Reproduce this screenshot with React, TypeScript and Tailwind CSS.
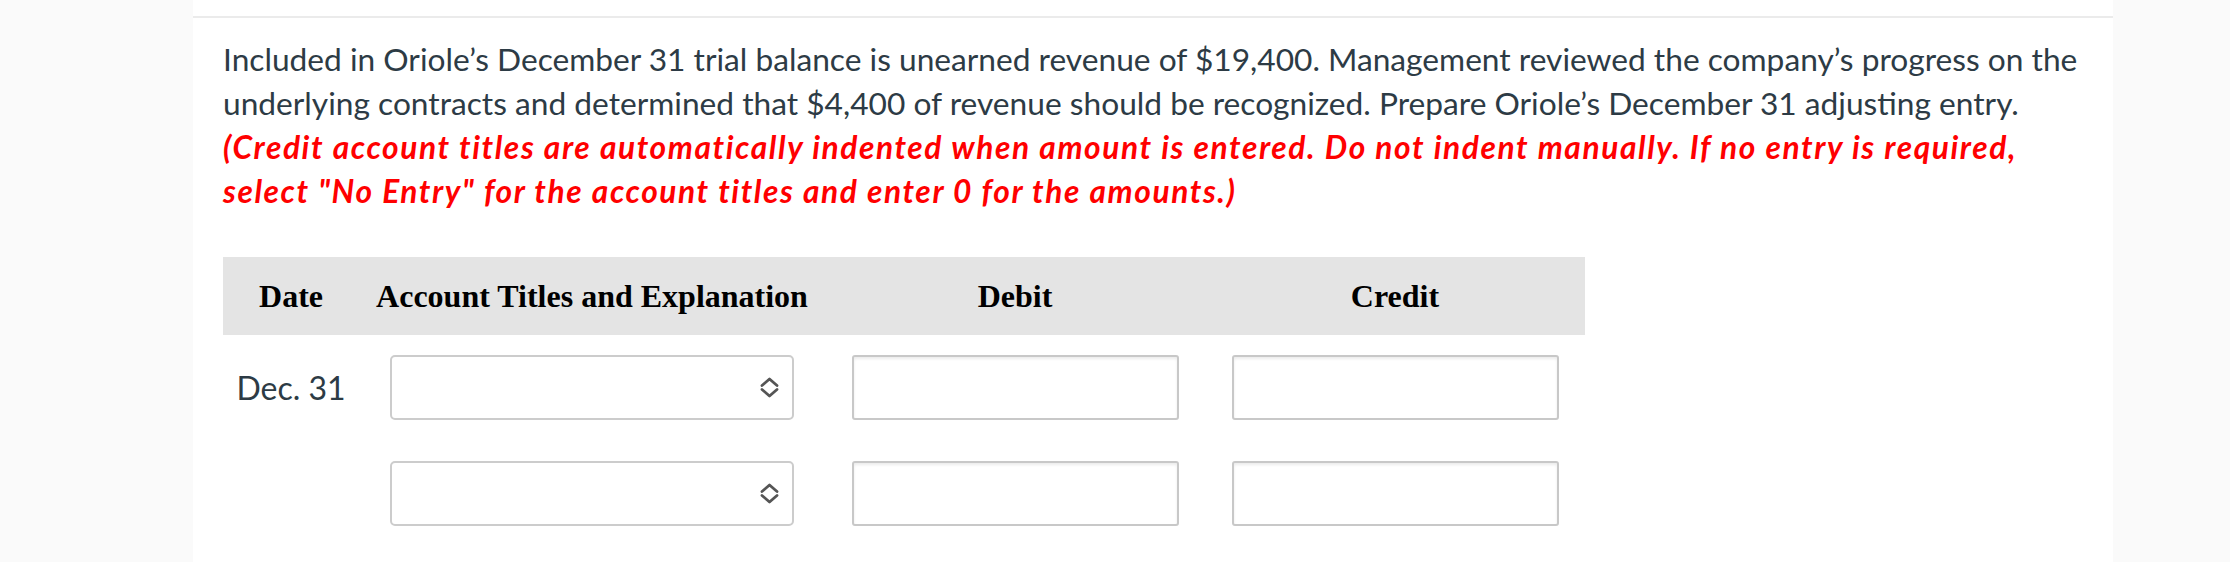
import React from "react";

function Chevrons() {
  return (
    <svg width="19" height="21" viewBox="0 0 19 21" fill="none" stroke="#555555" strokeWidth="2.8" strokeLinecap="round" strokeLinejoin="round">
      <path d="M2 8.5 L9.5 2 L17 8.5" />
      <path d="M2 12.5 L9.5 19 L17 12.5" />
    </svg>
  );
}

function SelectBox() {
  return (
    <div className="w-[404px] h-[65px] border-2 border-[#cccccc] rounded-[5px] bg-white flex items-center justify-end pr-[13px]">
      <Chevrons />
    </div>
  );
}

function AmountBox() {
  return (
    <div className="w-[327px] h-[65px] border-2 border-[#c8c8c8] rounded-[3px] bg-white shadow-[inset_0_2px_3px_rgba(0,0,0,0.08)]" />
  );
}

export default function App() {
  return (
    <div className="w-[2230px] h-[562px] bg-[#fafafa] overflow-hidden">
      <div className="ml-[193px] w-[1920px] h-[562px] bg-white pt-[16px]">
        <div className="border-t-2 border-[#ebebeb] pl-[30px] pt-[19px]">
          <p className="w-[1865px] text-[31.7px] leading-[44px] text-[#2d3b45] font-['Lato','Noto_Sans',sans-serif]">
            Included in Oriole’s December 31 trial balance is unearned revenue of $19,400. Management reviewed the company’s progress on the underlying contracts and determined that $4,400 of revenue should be recognized. Prepare Oriole’s December 31 adjusting entry.{" "}
            <span className="text-[#ff0000] font-bold italic tracking-[0.05em] [font-variant-ligatures:none]">
              (Credit account titles are automatically indented when amount is entered. Do not indent manually. If no entry is required, select "No Entry" for the account titles and enter 0 for the amounts.)
            </span>
          </p>
          <div className="mt-[44px] w-[1362px]">
            <div className="grid grid-cols-[136px_466px_380px_380px] h-[78px] bg-[#e4e4e4] items-center text-black font-bold text-[32px] font-['Liberation_Serif','Times_New_Roman',serif]">
              <div className="text-center">Date</div>
              <div className="text-center">Account Titles and Explanation</div>
              <div className="text-center">Debit</div>
              <div className="text-center">Credit</div>
            </div>
            <div className="grid grid-cols-[136px_466px_380px_380px] items-center mt-[20px] text-[32px] text-[#2d3b45] font-['Lato','Noto_Sans',sans-serif]">
              <div className="text-center">Dec. 31</div>
              <div className="flex justify-center"><SelectBox /></div>
              <div className="flex justify-center"><AmountBox /></div>
              <div className="flex justify-center"><AmountBox /></div>
            </div>
            <div className="grid grid-cols-[136px_466px_380px_380px] items-center mt-[41px]">
              <div />
              <div className="flex justify-center"><SelectBox /></div>
              <div className="flex justify-center"><AmountBox /></div>
              <div className="flex justify-center"><AmountBox /></div>
            </div>
          </div>
        </div>
      </div>
    </div>
  );
}
